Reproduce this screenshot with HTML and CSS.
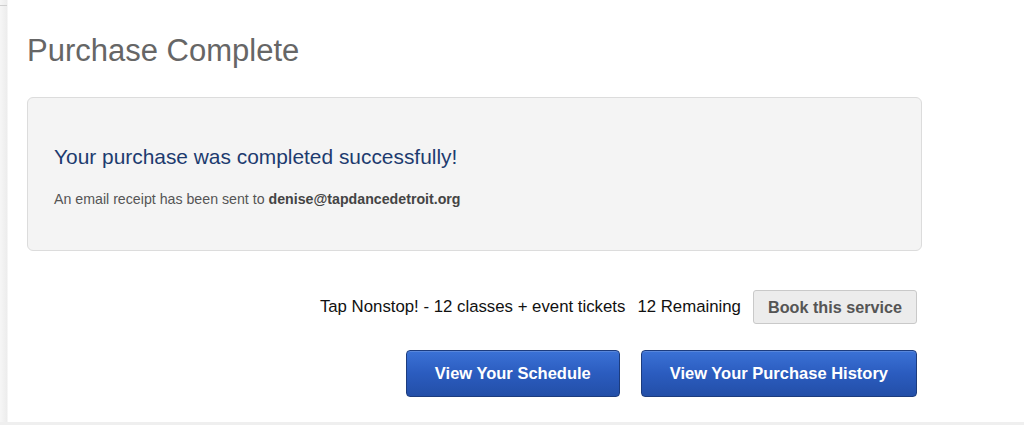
FILE: index.html
```html
<!DOCTYPE html>
<html lang="en">
<head>
<meta charset="utf-8">
<title>Purchase Complete</title>
<link rel="stylesheet" href="styles.css">
</head>
<body>
<div class="page">
  <main class="panel">
    <h1 class="title">Purchase Complete</h1>
    <section class="notice">
      <h2 class="notice-heading">Your purchase was completed successfully!</h2>
      <p class="notice-text">An email receipt has been sent to <strong>denise@tapdancedetroit.org</strong></p>
    </section>
    <div class="service-row">
      <span class="service-name">Tap Nonstop! - 12 classes + event tickets</span>
      <span class="service-remaining">12 Remaining</span>
      <button class="btn-book" type="button">Book this service</button>
    </div>
    <div class="action-row">
      <button class="btn-primary" type="button">View Your Schedule</button>
      <button class="btn-primary" type="button">View Your Purchase History</button>
    </div>
  </main>
</div>
</body>
</html>
```
FILE: styles.css
```css
* { box-sizing: border-box; }

html, body {
  margin: 0;
  padding: 0;
}

body {
  width: 1024px;
  height: 425px;
  overflow: hidden;
  background: #efefef;
  font-family: "Liberation Sans", Arial, Helvetica, sans-serif;
}

.page {
  height: 422px;
  background: linear-gradient(to right, #f6f6f6 0, #ececec 7px, #fff 8px);
  position: relative;
}

.page::before {
  content: "";
  position: absolute;
  left: 0;
  top: 5px;
  width: 7px;
  height: 1px;
  background: #cfcfcf;
}

.panel {
  margin-left: 8px;
  height: 422px;
  background: #fff;
  padding: 34px 0 0 19px;
  width: 914px;
}

.title {
  margin: 0 0 29px 0;
  font-size: 31px;
  line-height: 34px;
  font-weight: normal;
  color: #666;
}

.notice {
  background: #f4f4f4;
  border: 1px solid #dcdcdc;
  border-radius: 6px;
  padding: 47px 26px 41px 26px;
  width: 895px;
}

.notice-heading {
  margin: 0 0 22px 0;
  font-size: 20.9px;
  line-height: 23px;
  font-weight: normal;
  color: #1d3b6f;
}

.notice-text {
  margin: 0;
  font-size: 14.2px;
  line-height: 19px;
  color: #555;
}

.notice-text strong {
  color: #444;
}

.service-row {
  display: flex;
  justify-content: flex-end;
  align-items: center;
  gap: 12px;
  margin-top: 39px;
  width: 890px;
  font-size: 16.8px;
  color: #111;
}

.btn-book {
  font-family: inherit;
  font-size: 16.2px;
  font-weight: bold;
  color: #555;
  background: #ececec;
  border: 1px solid #c9c9c9;
  border-radius: 3px;
  height: 34px;
  padding: 0 14px;
}

.action-row {
  display: flex;
  justify-content: flex-end;
  gap: 21px;
  margin-top: 26px;
  width: 890px;
}

.btn-primary {
  font-family: inherit;
  font-size: 16.5px;
  font-weight: bold;
  color: #fff;
  height: 47px;
  padding: 0 28px;
  border: 1px solid #1c3c7e;
  border-radius: 4px;
  background: linear-gradient(to bottom, #3b72d6 0%, #2b5cbf 50%, #234fa8 100%);
  box-shadow: inset 0 1px 0 rgba(255,255,255,0.15);
}
```
